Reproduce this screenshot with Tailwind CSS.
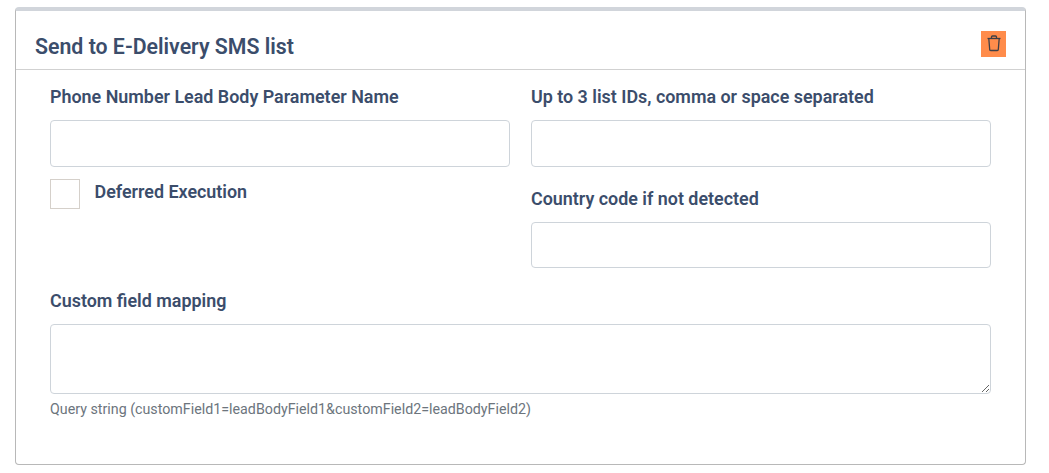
<!DOCTYPE html>
<html lang="en">
    <head>
        <meta charset="UTF-8" />
        <meta name="viewport" content="width=device-width, initial-scale=1.0" />
        <script src="https://cdn.jsdelivr.net/npm/@tailwindcss/browser@4"></script>
        <title>Send to E-Delivery SMS list</title>
    </head>
    <body class="bg-white font-['Roboto',sans-serif] text-[#3b4d6b]">
        <div class="pt-[7px] pl-[15px] w-[1026px]">
            <div class="h-[458px] rounded-[4px] border border-t-4 border-[#b8b8b8] border-t-[#d1d5db]">
                <div class="h-[59px] border-b border-[#d1d1d1] pl-[19px] pr-[19px] flex justify-between">
                    <h2 class="mt-[22px] text-[21.3px] leading-[28px] font-semibold">Send to E-Delivery SMS list</h2>
                    <button class="mt-[20px] w-[25px] h-[26px] bg-[#ff8c4b] flex items-center justify-center">
                        <svg class="w-[16px] h-[17px] -mt-[2px]" viewBox="0 0 16 17" fill="none" stroke="#3f3f46" stroke-width="1.3">
                            <path d="M1.5 3.5h13" />
                            <path d="M5.5 3.5V2a1 1 0 0 1 1-1h3a1 1 0 0 1 1 1v1.5" />
                            <path d="M2.8 3.5l.9 11a1 1 0 0 0 1 1h6.6a1 1 0 0 0 1-1l.9-11" />
                        </svg>
                    </button>
                </div>
                <div class="pl-[34px] pr-[34px]">
                    <div class="grid grid-cols-[460px_460px] gap-x-[21px]">
                        <div>
                            <label class="block mt-[15px] h-[24px] text-[17.9px] leading-[24px] font-semibold">Phone Number Lead Body Parameter Name</label>
                            <input type="text" class="block mt-[11px] w-full h-[47px] rounded-[4px] border border-[#ced4da] bg-white" />
                            <div class="mt-[12px] flex items-start">
                                <input type="checkbox" class="appearance-none w-[30px] h-[30px] border border-[#d5d0ca] bg-white" />
                                <label class="ml-[14.5px] mt-[1px] text-[17.9px] leading-[24px] font-semibold">Deferred Execution</label>
                            </div>
                        </div>
                        <div>
                            <label class="block mt-[15px] h-[24px] text-[17.9px] leading-[24px] font-semibold">Up to 3 list IDs, comma or space separated</label>
                            <input type="text" class="block mt-[11px] w-full h-[47px] rounded-[4px] border border-[#ced4da] bg-white" />
                            <label class="block mt-[20px] h-[24px] text-[17.9px] leading-[24px] font-semibold">Country code if not detected</label>
                            <input type="text" class="block mt-[11px] w-full h-[46px] rounded-[4px] border border-[#ced4da] bg-white" />
                        </div>
                    </div>
                    <label class="block mt-[21px] h-[24px] text-[17.9px] leading-[24px] font-semibold">Custom field mapping</label>
                    <textarea class="block mt-[11px] w-[941px] h-[70px] rounded-[4px] border border-[#ced4da] bg-white"></textarea>
                    <p class="mt-[6px] text-[14.25px] leading-[18px] text-[#6c757d]">Query string (customField1=leadBodyField1&amp;customField2=leadBodyField2)</p>
                </div>
            </div>
        </div>
    </body>
</html>
